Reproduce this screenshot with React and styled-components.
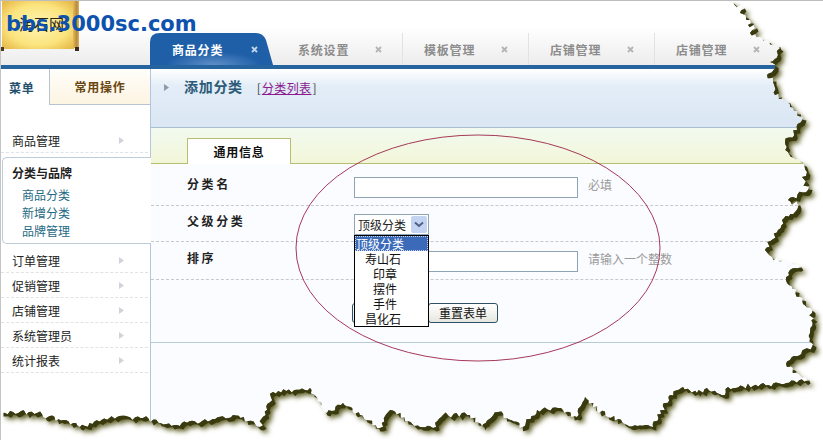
import React from "react";
import styled, { createGlobalStyle } from "styled-components";

const CJK = `"Noto Sans CJK SC", "Liberation Sans", sans-serif`;

const GlobalStyle = createGlobalStyle`
    html, body {
        margin: 0;
        padding: 0;
        background: #fff;
    }
    * {
        box-sizing: border-box;
    }
`;

const topTabs = ["商品分类", "系统设置", "模板管理", "店铺管理", "店铺管理"];
const menuTop = ["商品管理"];
const menuSub = ["商品分类", "新增分类", "品牌管理"];
const menuBottom = ["订单管理", "促销管理", "店铺管理", "系统管理员", "统计报表"];
const options = ["顶级分类", "寿山石", "印章", "摆件", "手件", "昌化石"];

// outline of the torn paper, clockwise from the top right
const tornPoints = [
    [728, 0], [743, 8], [740, 13], [750, 20], [748, 25], [755, 28], [750, 33], [762, 38],
    [780, 48], [778, 55], [770, 62], [775, 68], [767, 75], [773, 82], [775, 95], [787, 100],
    [790, 107], [803, 117], [797, 130], [785, 142], [788, 152], [800, 162], [807, 172],
    [802, 177], [808, 190], [788, 200], [798, 205], [795, 212], [782, 220], [778, 230],
    [765, 250], [772, 257], [800, 267], [790, 270], [787, 283], [800, 297], [812, 313],
    [810, 333], [812, 347], [790, 360], [787, 367], [807, 380], [753, 386], [728, 387],
    [725, 395], [707, 388], [697, 393], [683, 387], [670, 395], [653, 427], [627, 425],
    [597, 410], [585, 397], [577, 417], [558, 408], [537, 410], [523, 427], [498, 412],
    [482, 427], [470, 415], [443, 415], [433, 428], [420, 427], [390, 410], [380, 428],
    [360, 415], [343, 403], [327, 413], [310, 388], [273, 392], [260, 427], [233, 415],
    [177, 425], [143, 418], [117, 417], [80, 427], [37, 413], [13, 412], [2, 413],
];

function buildTornPath() {
    let seed = 17;
    const rand = () => {
        seed = (seed * 1103515245 + 12345) % 2147483648;
        return seed / 2147483648 - 0.5;
    };
    const out = [];
    tornPoints.forEach((p, i) => {
        const next = tornPoints[i + 1];
        out.push(p);
        if (!next) return;
        const len = Math.hypot(next[0] - p[0], next[1] - p[1]);
        const steps = Math.floor(len / 2.5);
        for (let s = 1; s < steps; s++) {
            const t = s / steps;
            const jag = rand() * 5;
            out.push([
                p[0] + (next[0] - p[0]) * t + jag * (next[1] - p[1]) / len,
                p[1] + (next[1] - p[1]) * t - jag * (next[0] - p[0]) / len,
            ]);
        }
    });
    out.push([0, 413], [0, 0]);
    return "M" + out.map((p) => p[0].toFixed(1) + " " + p[1].toFixed(1)).join("L") + "Z";
}

const tornPath = buildTornPath();
const outside = "M0 0H823V440H0Z" + tornPath;

function TornEdge() {
    return (
        <Overlay viewBox="0 0 823 440">
            <defs>
                <filter id="blur" x="-5%" y="-5%" width="110%" height="110%">
                    <feGaussianBlur stdDeviation="2.5" />
                </filter>
                <clipPath id="outside">
                    <path d={outside} clipRule="evenodd" />
                </clipPath>
            </defs>
            <path d={outside} fill="#fff" fillRule="evenodd" />
            <g clipPath="url(#outside)">
                <path d={tornPath} fill="#5f5f28" transform="translate(6 6)" filter="url(#blur)" />
                <path d={tornPath} fill="#3a3a10" transform="translate(3.5 3.5)" />
            </g>
        </Overlay>
    );
}

function ScrollLogo() {
    return (
        <LogoArt viewBox="0 0 80 50">
            <defs>
                <radialGradient id="paper" cx="50%" cy="50%" r="65%">
                    <stop offset="0" stopColor="#fff6b4" />
                    <stop offset="0.65" stopColor="#fbe47e" />
                    <stop offset="1" stopColor="#e8bc4c" />
                </radialGradient>
                <linearGradient id="roller" x1="0" x2="1" y1="0" y2="0">
                    <stop offset="0" stopColor="#e6bc58" />
                    <stop offset="0.6" stopColor="#b98c3e" />
                    <stop offset="1" stopColor="#d8b060" />
                </linearGradient>
            </defs>
            <rect x="1" y="0" width="72" height="48" fill="url(#paper)" />
            <rect x="72" y="0" width="6" height="47" fill="url(#roller)" />
            <rect x="0" y="46" width="3" height="4" fill="#4a3a20" />
            <rect x="74" y="46" width="4" height="4" fill="#3a2c18" />
        </LogoArt>
    );
}

function Arrow({ color }) {
    return (
        <svg width="5" height="7" viewBox="0 0 5 7">
            <path d="M0 0L5 3.5L0 7Z" fill={color} />
        </svg>
    );
}

function CloseMark({ active }) {
    return (
        <svg width="7" height="7" viewBox="0 0 7 7">
            <path d="M1 1L6 6M6 1L1 6" stroke={active ? "#c4d6ea" : "#b4b4b4"} strokeWidth="1.8" />
        </svg>
    );
}

function ChevronDown() {
    return (
        <svg width="10" height="7" viewBox="0 0 10 7">
            <path d="M1 1.5L5 5L9 1.5" fill="none" stroke="#4d6185" strokeWidth="2" />
        </svg>
    );
}

function App() {
    return (
        <>
            <GlobalStyle />
            <Page>
                <Header>
                    <Logo>
                        <ScrollLogo />
                        <LogoName>淘石网</LogoName>
                        <LogoUrl>bbs.3000sc.com</LogoUrl>
                    </Logo>
                    <TopTabs>
                        {topTabs.map((t, i) => (
                            <TopTab key={i} $active={i === 0}>
                                <span>{t}</span>
                                <CloseMark active={i === 0} />
                            </TopTab>
                        ))}
                    </TopTabs>
                </Header>
                <BlueBar />
                <Body>
                    <Sidebar>
                        <SideTabs>
                            <SideTab>菜单</SideTab>
                            <SideTab $other>常用操作</SideTab>
                        </SideTabs>
                        <Menu>
                            {menuTop.map((m) => (
                                <MenuItem key={m}>
                                    {m}
                                    <Arrow color="#d0d4d8" />
                                </MenuItem>
                            ))}
                            <MenuGroup>
                                <GroupTitle>分类与品牌</GroupTitle>
                                {menuSub.map((m) => (
                                    <GroupLink key={m}>{m}</GroupLink>
                                ))}
                            </MenuGroup>
                            {menuBottom.map((m) => (
                                <MenuItem key={m}>
                                    {m}
                                    <Arrow color="#d0d4d8" />
                                </MenuItem>
                            ))}
                        </Menu>
                    </Sidebar>
                    <Main>
                        <TitleBar>
                            <Arrow color="#8a9aa8" />
                            <Title>添加分类</Title>
                            <TitleLink>
                                [<a>分类列表</a>]
                            </TitleLink>
                        </TitleBar>
                        <FormTabs>
                            <FormTab>通用信息</FormTab>
                        </FormTabs>
                        <Form>
                            <FormRow $height={42} $top={13}>
                                <FieldLabel>分类名</FieldLabel>
                                <TextInput />
                                <Hint>必填</Hint>
                            </FormRow>
                            <FormRow $height={36} $top={8}>
                                <FieldLabel>父级分类</FieldLabel>
                                <SelectWrap>
                                    <Select>
                                        <span>顶级分类</span>
                                        <SelectButton>
                                            <ChevronDown />
                                        </SelectButton>
                                    </Select>
                                    <Dropdown>
                                        {options.map((o, i) => (
                                            <DropOption key={o} $active={i === 0} $pad={[1, 10, 18, 18, 18, 10][i]}>
                                                {o}
                                            </DropOption>
                                        ))}
                                    </Dropdown>
                                </SelectWrap>
                            </FormRow>
                            <FormRow $height={38} $top={9}>
                                <FieldLabel>排序</FieldLabel>
                                <TextInput />
                                <Hint>请输入一个整数</Hint>
                            </FormRow>
                            <Buttons>
                                <FormButton $width={76} />
                                <FormButton $width={70}>重置表单</FormButton>
                            </Buttons>
                        </Form>
                    </Main>
                </Body>
                <RedCircle viewBox="0 0 823 440">
                    <ellipse cx="478" cy="248" rx="182" ry="113"
                        fill="none" stroke="#9c2347" strokeWidth="0.9" />
                </RedCircle>
                <TornEdge />
            </Page>
        </>
    );
}

const Page = styled.div`
    position: relative;
    width: 823px;
    height: 440px;
    overflow: hidden;
    display: flex;
    flex-direction: column;
    background: #fff;
    font-family: ${CJK};
    font-size: 12px;
    color: #222;
    border-top: 1px solid #bdbdbd;
    border-left: 1px solid #c4c4c4;
`;

const Header = styled.div`
    height: 64px;
    display: flex;
    align-items: flex-end;
    background: linear-gradient(#fff 40%, #ececec);
`;

const Logo = styled.div`
    position: relative;
    align-self: flex-start;
    width: 149px;
    height: 50px;
    flex: none;
`;

const LogoArt = styled.svg`
    display: block;
    width: 80px;
    height: 50px;
`;

const LogoName = styled.span`
    position: absolute;
    left: 18px;
    top: 13px;
    font-size: 15px;
    line-height: 20px;
    color: #2a2410;
    letter-spacing: 0;
`;

const LogoUrl = styled.span`
    position: absolute;
    left: 5px;
    top: 11px;
    font-family: "DejaVu Sans", sans-serif;
    font-weight: 700;
    font-size: 21px;
    line-height: 24px;
    color: #0d52ae;
    white-space: nowrap;
`;

const TopTabs = styled.div`
    display: flex;
    height: 32px;
`;

const TopTab = styled.div`
    width: ${(p) => (p.$active ? "127px" : "126px")};
    flex: none;
    display: flex;
    align-items: center;
    justify-content: space-between;
    padding: ${(p) => (p.$active ? "0 19px 0 22px" : "0 20px 0 21px")};
    font-weight: 700;
    letter-spacing: 0.8px;
    color: ${(p) => (p.$active ? "#fff" : "#8c8c8c")};
    background: ${(p) => (p.$active
        ? "radial-gradient(ellipse 50px 14px at 50% 100%, #5f8fc8, #1f5fa8 95%)"
        : "none")};
    clip-path: ${(p) => (p.$active
        ? `path("M0 32V9Q0 0 10 0H106Q113 0 116 7L123 32Z")`
        : "none")};
    border-right: ${(p) => (p.$active ? "0" : "1px solid #e2e2e2")};
`;

const BlueBar = styled.div`
    height: 4px;
    flex: none;
    background: #26649f;
`;

const Body = styled.div`
    flex: 1;
    display: flex;
    min-height: 0;
`;

const Sidebar = styled.div`
    width: 150px;
    flex: none;
    border-right: 1px solid #b4c6dc;
    background: #fff;
`;

const SideTabs = styled.div`
    display: flex;
    height: 36px;
`;

const SideTab = styled.div`
    width: ${(p) => (p.$other ? "101px" : "48px")};
    flex: none;
    display: flex;
    align-items: center;
    justify-content: ${(p) => (p.$other ? "center" : "flex-start")};
    padding-left: ${(p) => (p.$other ? "0" : "8px")};
    font-weight: 700;
    letter-spacing: 0.8px;
    color: ${(p) => (p.$other ? "#6a4610" : "#24506e")};
    background: ${(p) => (p.$other ? "linear-gradient(#fffefa, #fdf4e2)" : "#fff")};
    border-left: ${(p) => (p.$other ? "1px solid #b9c4d2" : "0")};
    border-bottom: ${(p) => (p.$other ? "1px solid #b9c4d2" : "0")};
`;

const Menu = styled.div`
    padding-top: 23px;
`;

const MenuItem = styled.div`
    height: 25px;
    margin-right: 2px;
    padding: 0 24px 0 11px;
    display: flex;
    align-items: center;
    justify-content: space-between;
    border-bottom: 1px dashed #dfe3e6;
`;

const MenuGroup = styled.div`
    margin: 4px -1px 4px 1px;
    height: 87px;
    padding: 6px 0 0 9px;
    background: #fff;
    border: 1px solid #bcccd8;
    border-right: 0;
    border-radius: 5px 0 0 5px;
    position: relative;
`;

const GroupTitle = styled.div`
    font-weight: 700;
    line-height: 18px;
    margin-bottom: 4px;
`;

const GroupLink = styled.div`
    padding-left: 10px;
    line-height: 18px;
    color: #1f6a84;
`;

const Main = styled.div`
    flex: 1;
    display: flex;
    flex-direction: column;
    background: #fbfcff;
`;

const TitleBar = styled.div`
    height: 59px;
    flex: none;
    padding: 9px 0 0 13px;
    display: flex;
    align-items: flex-start;
    background: linear-gradient(#fff 0, #e2edf7 30%, #dbe6f4);
    border-bottom: 1px solid #a9c0d2;

    svg {
        margin-top: 6px;
    }
`;

const Title = styled.h1`
    margin: 0 14px 0 15px;
    font-size: 14px;
    line-height: 17px;
    font-weight: 700;
    letter-spacing: 0.7px;
    color: #2c5a78;
`;

const TitleLink = styled.span`
    margin-top: 1px;
    line-height: 17px;
    color: #444;

    a {
        color: #8a1a8e;
        text-decoration: underline;
        letter-spacing: 0.4px;
        margin: 0 1px;
    }
`;

const FormTabs = styled.div`
    height: 36px;
    flex: none;
    padding: 10px 0 0 36px;
    display: flex;
    background: linear-gradient(#f2faf0, #f2f6d8);
    border-bottom: 1px solid #b6bf70;
`;

const FormTab = styled.div`
    width: 104px;
    height: 26px;
    display: flex;
    align-items: center;
    justify-content: center;
    font-weight: 700;
    letter-spacing: 0.8px;
    color: #111;
    background: #fff;
    border: 1px solid #b6bf70;
    border-bottom: 0;
`;

const Form = styled.div`
    display: flex;
    flex-direction: column;
    border-bottom: 1px solid #b5cbd6;
    height: 179px;
`;

const FormRow = styled.div`
    height: ${(p) => p.$height}px;
    flex: none;
    padding: ${(p) => p.$top}px 0 0 36px;
    display: flex;
    align-items: flex-start;
    border-bottom: 1px dashed #c8c8c8;
`;

const FieldLabel = styled.label`
    width: 167px;
    flex: none;
    margin-top: -1px;
    line-height: 16px;
    font-weight: 700;
    letter-spacing: 2.6px;
    color: #222;
`;

const TextInput = styled.div`
    width: 224px;
    height: 21px;
    flex: none;
    background: #fff;
    border: 1px solid #8fa3b4;
`;

const Hint = styled.span`
    margin-left: 10px;
    line-height: 16px;
    color: #9a9a9a;
`;

const SelectWrap = styled.div`
    position: relative;
    width: 75px;
    height: 21px;
    flex: none;
`;

const Select = styled.div`
    height: 21px;
    padding: 0 1px 0 3px;
    display: flex;
    align-items: center;
    justify-content: space-between;
    background: #fff;
    border: 1px solid #8fa3b4;
`;

const SelectButton = styled.div`
    width: 16px;
    height: 17px;
    display: flex;
    align-items: center;
    justify-content: center;
    background: #c3d4f2;
    border-radius: 2px;
`;

const Dropdown = styled.div`
    position: absolute;
    z-index: 2;
    top: 21px;
    left: 0;
    width: 75px;
    height: 92px;
    background: #fff;
    border: 1px solid #000;
`;

const DropOption = styled.div`
    height: 15px;
    line-height: 15px;
    padding-left: ${(p) => p.$pad}px;
    color: ${(p) => (p.$active ? "#fff" : "#111")};
    background: ${(p) => (p.$active ? "#3a6ab8" : "none")};
    outline: ${(p) => (p.$active ? "1px dotted #c9d4e8" : "0")};
    outline-offset: -1px;
`;

const Buttons = styled.div`
    padding: 23px 0 0 201px;
    display: flex;
`;

const FormButton = styled.button`
    width: ${(p) => p.$width}px;
    height: 20px;
    padding: 0;
    font-family: inherit;
    font-size: 12px;
    line-height: 16px;
    color: #111;
    background: linear-gradient(#fff, #e6e6e0);
    border: 1px solid #2e5068;
    border-radius: 3px;
`;

const RedCircle = styled.svg`
    position: absolute;
    z-index: 3;
    top: -1px;
    left: -1px;
    width: 823px;
    height: 440px;
    pointer-events: none;
`;

const Overlay = styled.svg`
    position: absolute;
    z-index: 4;
    top: -1px;
    left: -1px;
    width: 823px;
    height: 440px;
    pointer-events: none;
`;

export default App;
